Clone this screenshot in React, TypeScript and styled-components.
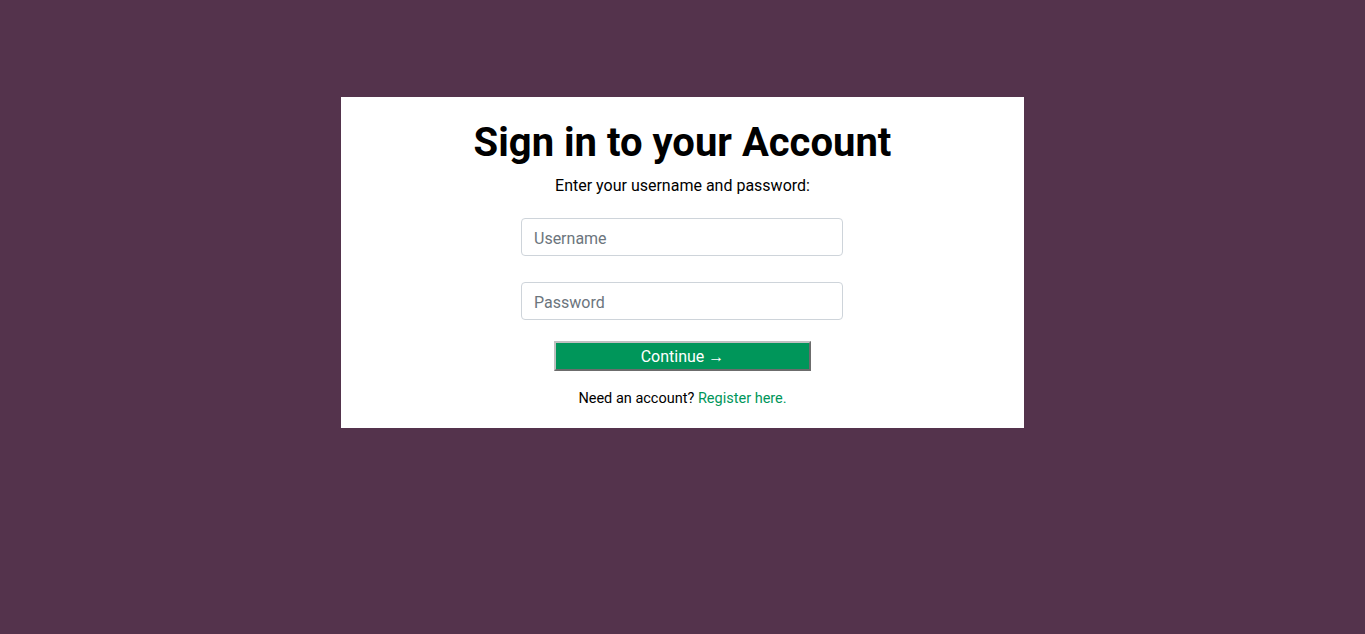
import React from "react";
import styled, { createGlobalStyle } from "styled-components";

const Global = createGlobalStyle`
  html, body { margin: 0; padding: 0; }
  body {
    background: #54334c;
    font-family: Roboto, "Liberation Sans", sans-serif;
    min-height: 634px;
  }
`;

const Page = styled.div`
  display: flex;
  justify-content: center;
  padding-top: 97px;
`;

const Card = styled.form`
  width: 683px;
  box-sizing: border-box;
  background: #ffffff;
  display: flex;
  flex-direction: column;
  align-items: center;
  padding: 22px 0 20px;
`;

const Title = styled.h1`
  margin: 0;
  font-size: 40px;
  font-weight: 700;
  line-height: 48px;
  color: #000;
`;

const Subtitle = styled.p`
  margin: 9px 0 0;
  font-size: 16px;
  line-height: 20px;
  color: #000;
`;

const Input = styled.input<{ $mt: number }>`
  box-sizing: border-box;
  width: 322px;
  height: 38px;
  margin-top: ${(p) => p.$mt}px;
  margin-right: 1px;
  padding: 2px 12px 0;
  border: 1px solid #ced4da;
  border-radius: 4px;
  font-family: Roboto, "Liberation Sans", sans-serif;
  font-size: 16px;
  color: #495057;
  &::placeholder { color: #6c757d; }
`;

const Button = styled.button`
  box-sizing: border-box;
  width: 257px;
  height: 30px;
  margin-top: 21px;
  background: #00965a;
  color: #fff;
  border: 2px outset #c0c0c0;
  font-family: Roboto, "Liberation Sans", sans-serif;
  font-size: 16px;
  padding: 0;
`;

const Arrow = styled.span`
  font-size: 16px;
`;

const Footer = styled.p`
  margin: 19px 0 0;
  font-size: 14.5px;
  line-height: 18px;
  color: #000;
`;

const Link = styled.a`
  color: #00965a;
  text-decoration: none;
`;

export default function App() {
  return (
    <>
      <Global />
      <Page>
        <Card onSubmit={(e) => e.preventDefault()}>
          <Title>Sign in to your Account</Title>
          <Subtitle>Enter your username and password:</Subtitle>
          <Input $mt={22} type="text" placeholder="Username" />
          <Input $mt={26} type="password" placeholder="Password" />
          <Button type="submit">
            Continue <Arrow>→</Arrow>
          </Button>
          <Footer>
            Need an account? <Link href="#">Register here.</Link>
          </Footer>
        </Card>
      </Page>
    </>
  );
}
